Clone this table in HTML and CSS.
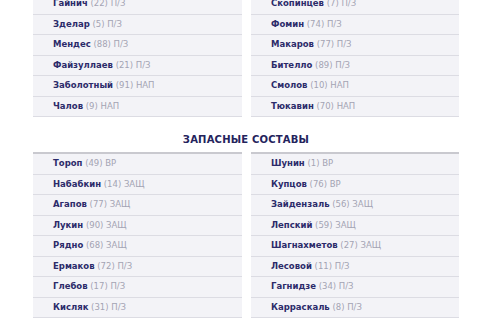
FILE: index.html
```html
<!DOCTYPE html>
<html lang="ru">
<head>
<meta charset="utf-8">
<link rel="stylesheet" href="styles.css">
</head>
<body>
<div class="page">
  <div class="cols main">
    <ul class="list">
      <li><b>Гайнич</b> (22) П/З</li>
      <li><b>Зделар</b> (5) П/З</li>
      <li><b>Мендес</b> (88) П/З</li>
      <li><b>Файзуллаев</b> (21) П/З</li>
      <li><b>Заболотный</b> (91) НАП</li>
      <li><b>Чалов</b> (9) НАП</li>
    </ul>
    <ul class="list">
      <li><b>Скопинцев</b> (7) П/З</li>
      <li><b>Фомин</b> (74) П/З</li>
      <li><b>Макаров</b> (77) П/З</li>
      <li><b>Бителло</b> (89) П/З</li>
      <li><b>Смолов</b> (10) НАП</li>
      <li><b>Тюкавин</b> (70) НАП</li>
    </ul>
  </div>
  <h2 class="title">ЗАПАСНЫЕ СОСТАВЫ</h2>
  <div class="cols subs">
    <ul class="list">
      <li><b>Тороп</b> (49) ВР</li>
      <li><b>Набабкин</b> (14) ЗАЩ</li>
      <li><b>Агапов</b> (77) ЗАЩ</li>
      <li><b>Лукин</b> (90) ЗАЩ</li>
      <li><b>Рядно</b> (68) ЗАЩ</li>
      <li><b>Ермаков</b> (72) П/З</li>
      <li><b>Глебов</b> (17) П/З</li>
      <li><b>Кисляк</b> (31) П/З</li>
    </ul>
    <ul class="list">
      <li><b>Шунин</b> (1) ВР</li>
      <li><b>Купцов</b> (76) ВР</li>
      <li><b>Зайдензаль</b> (56) ЗАЩ</li>
      <li><b>Лепский</b> (59) ЗАЩ</li>
      <li><b>Шагнахметов</b> (27) ЗАЩ</li>
      <li><b>Лесовой</b> (11) П/З</li>
      <li><b>Гагнидзе</b> (34) П/З</li>
      <li><b>Карраскаль</b> (8) П/З</li>
    </ul>
  </div>
</div>
</body>
</html>
```
FILE: styles.css
```css
html, body {
  margin: 0;
  padding: 0;
  background: #ffffff;
}
body {
  font-family: "DejaVu Sans", Inter, sans-serif;
  overflow: hidden;
}
.page {
  width: 426px;
  margin: -6px 0 0 33px;
}
.cols {
  display: grid;
  grid-template-columns: 209px 208px;
  column-gap: 9px;
}
.subs .list {
  border-top: 2px solid #c9c9cf;
}
.list {
  list-style: none;
  margin: 0;
  padding: 0;
}
.list li {
  height: 19.5px;
  line-height: 19.5px;
  padding-left: 20px;
  background: #f3f3f7;
  border-bottom: 1px solid #dcdce3;
  font-size: 8.5px;
  color: #a3a3b3;
  white-space: nowrap;
}
.list li b {
  color: #2c2b6a;
  font-weight: 700;
}
.title {
  margin: 0;
  padding-top: 11px;
  height: 24px;
  line-height: 24px;
  text-align: center;
  font-size: 10px;
  font-weight: 700;
  color: #24235c;
  letter-spacing: 0.2px;
}
```
